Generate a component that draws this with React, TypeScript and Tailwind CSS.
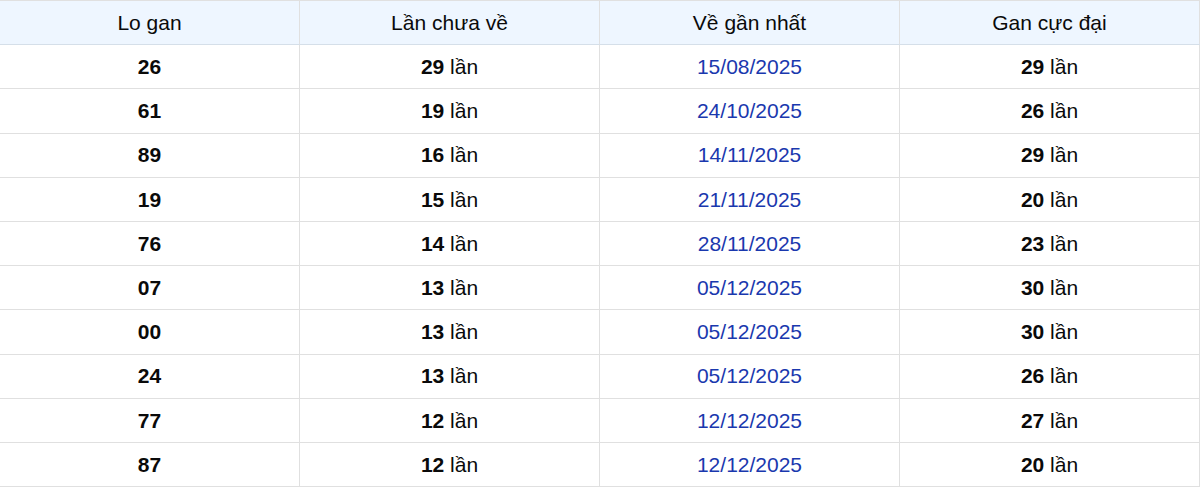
const rows = [
  { lo: '26', chua: 29, ngay: '15/08/2025', cuc: 29 },
  { lo: '61', chua: 19, ngay: '24/10/2025', cuc: 26 },
  { lo: '89', chua: 16, ngay: '14/11/2025', cuc: 29 },
  { lo: '19', chua: 15, ngay: '21/11/2025', cuc: 20 },
  { lo: '76', chua: 14, ngay: '28/11/2025', cuc: 23 },
  { lo: '07', chua: 13, ngay: '05/12/2025', cuc: 30 },
  { lo: '00', chua: 13, ngay: '05/12/2025', cuc: 30 },
  { lo: '24', chua: 13, ngay: '05/12/2025', cuc: 26 },
  { lo: '77', chua: 12, ngay: '12/12/2025', cuc: 27 },
  { lo: '87', chua: 12, ngay: '12/12/2025', cuc: 20 },
]

export default function App() {
  const cell = 'h-[44.2px] border border-[#e0e0e0] text-center align-middle p-0'
  const head = 'h-[44.2px] border border-[#e0e0e0] border-b-[#d5dfe9] text-center align-middle p-0 font-normal'
  return (
    <div className="bg-white min-h-screen" style={{ fontFamily: '"Liberation Sans", Arial, sans-serif' }}>
      <table className="w-[1201px] -ml-px border-collapse table-fixed text-[21px] text-[#0a0a0a]">
        <thead>
          <tr className="bg-[#eef6ff]">
            <th className={head}>Lo gan</th>
            <th className={head}>Lần chưa về</th>
            <th className={head}>Về gần nhất</th>
            <th className={head}>Gan cực đại</th>
          </tr>
        </thead>
        <tbody>
          {rows.map((r, i) => (
            <tr key={i}>
              <td className={`${cell} font-bold`}>{r.lo}</td>
              <td className={cell}><b>{r.chua}</b> lần</td>
              <td className={`${cell} text-[#1a38ae]`}>{r.ngay}</td>
              <td className={cell}><b>{r.cuc}</b> lần</td>
            </tr>
          ))}
        </tbody>
      </table>
    </div>
  )
}
